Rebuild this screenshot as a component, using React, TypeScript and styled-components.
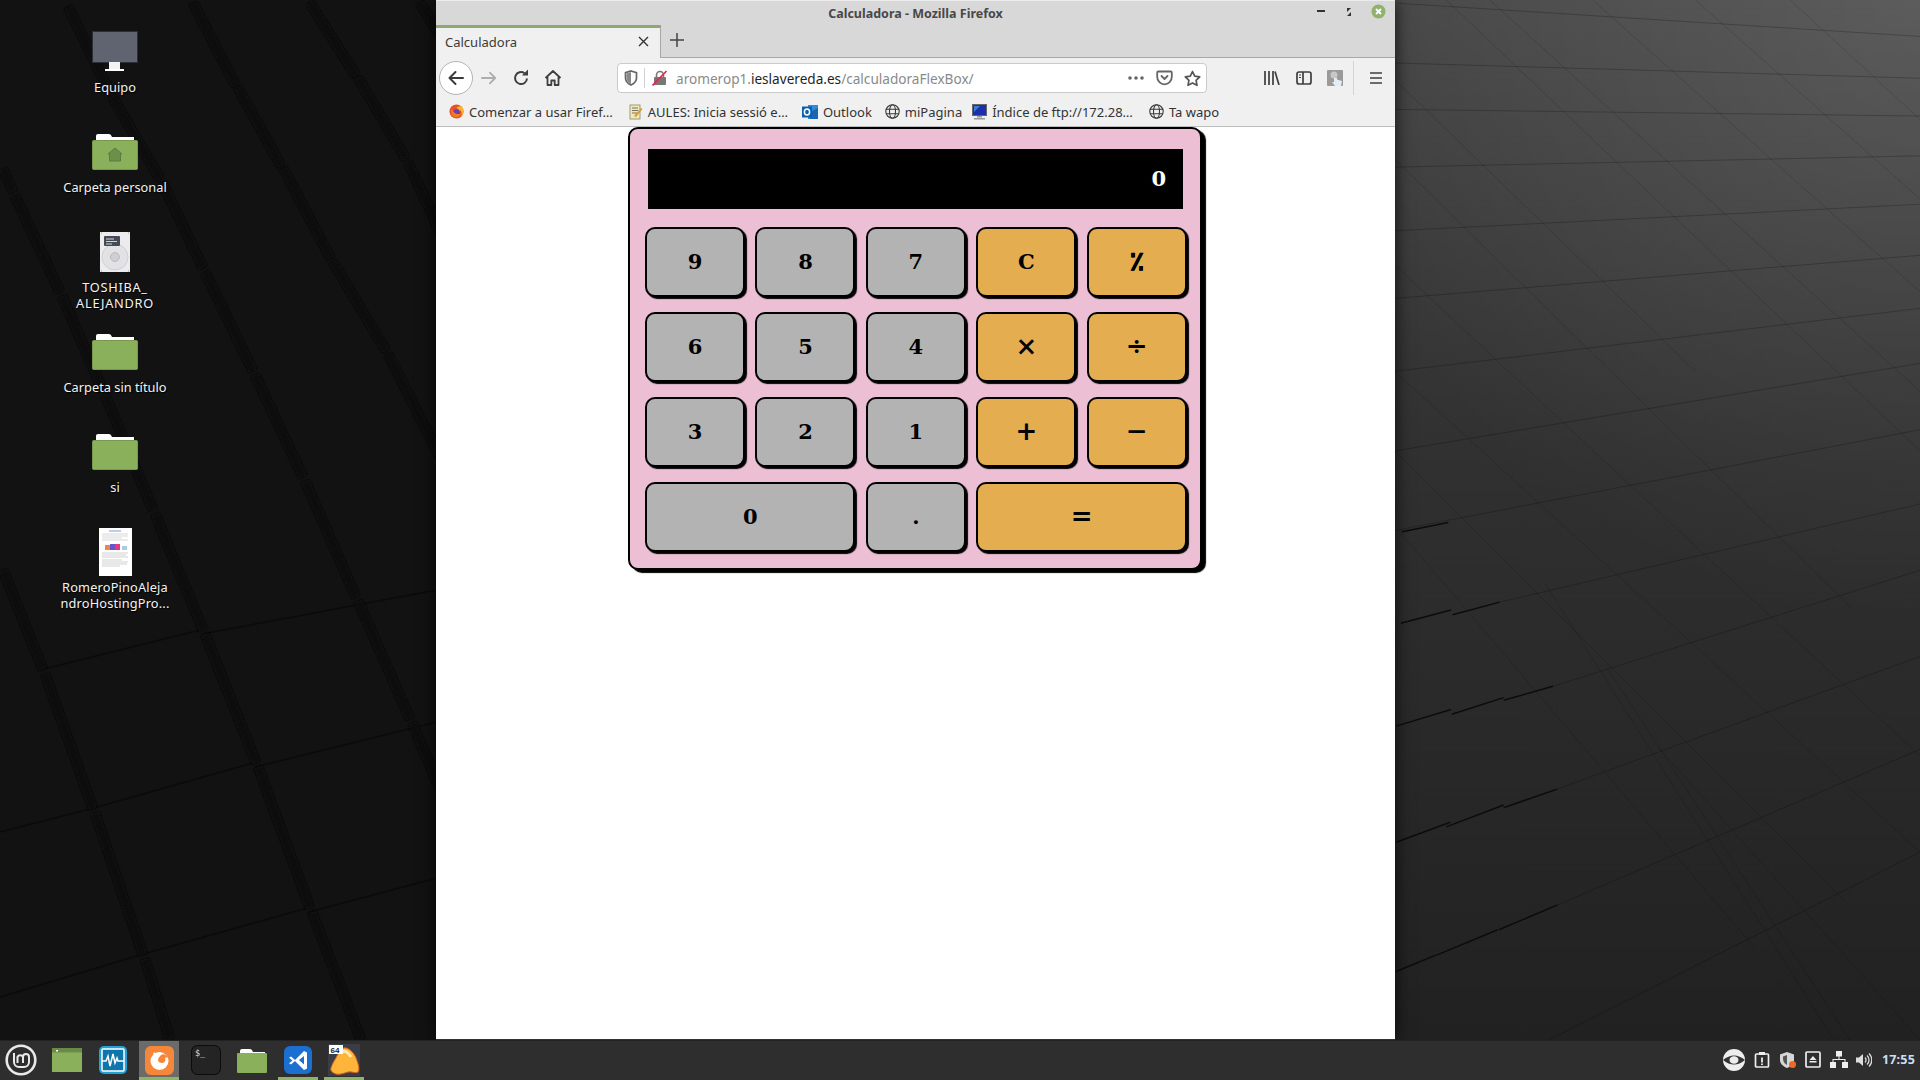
import React from "react";
import styled, { createGlobalStyle } from "styled-components";

const UI = `"Noto Sans", "Open Sans", "Liberation Sans", sans-serif`;
const CALC = `"DejaVu Serif", "Liberation Serif", serif`;

const Global = createGlobalStyle`
  html, body { margin: 0; padding: 0; background: #111; }
  * { box-sizing: border-box; }
`;

const Screen = styled.div`
  position: relative; width: 1920px; height: 1080px; overflow: hidden;
  display: flex; flex-direction: column; font-family: ${UI};
`;
const WallpaperSvg = styled.svg`
  position: absolute; left: 0; top: 0; width: 1920px; height: 1040px; z-index: 0;
`;
const Desktop = styled.div`
  position: relative; z-index: 1; height: 1040px; display: flex;
`;
const IconColumn = styled.div`
  width: 436px; padding: 28px 0 0 55px; display: flex; flex-direction: column;
`;
const DeskItem = styled.div`
  width: 120px; height: 100px; display: flex; flex-direction: column; align-items: center;
`;
const DeskIconBox = styled.div`
  height: 48px; margin-bottom: 3px; display: flex; align-items: center; justify-content: center;
`;
const DeskLabel = styled.div<{ $track: number }>`
  font-size: 12.8px; line-height: 16px; color: #f2f2f2; text-align: center; white-space: nowrap;
  letter-spacing: ${p => p.$track}px; text-shadow: 1px 1px 1px #000;
`;

const Win = styled.div`
  width: 959px; height: 1040px; display: flex; flex-direction: column; background: #fff;
  box-shadow: 0 0 16px rgba(0,0,0,.75);
`;
const TitleBar = styled.div`
  height: 25px; background: #d8d8d8; border-top: 1px solid #ececec; display: flex; align-items: center;
  position: relative; justify-content: center; font-size: 12.5px; font-weight: 700; color: #484848;
`;
const WinButtons = styled.div`
  position: absolute; right: 9px; top: 3px; display: flex; align-items: center; gap: 16px;
`;
const TabStrip = styled.div`
  height: 33px; background: #d8d8d8; display: flex; border-bottom: 1px solid #a8a8a8;
`;
const Tab = styled.div`
  width: 225px; height: 33px; background: #f0f0f0; border-top: 3px solid #8fa873; border-right: 1px solid #a8a8a8;
  display: flex; align-items: center; justify-content: space-between; padding: 0 11px 3px 9px;
  font-size: 13px; color: #3a3a3a;
`;
const NewTab = styled.div`
  width: 32px; display: flex; align-items: center; justify-content: center; padding-bottom: 2px;
`;
const NavBar = styled.div`
  height: 42px; background: #f0f0f0; display: flex; align-items: center; padding: 0 0 2px 3px;
`;
const BackBtn = styled.div`
  width: 34px; height: 34px; border-radius: 50%; background: #fff; border: 1px solid #b4b4b4;
  display: flex; align-items: center; justify-content: center; flex: none;
`;
const NavIcon = styled.div<{ $w: number }>`
  width: ${p => p.$w}px; height: 30px; display: flex; align-items: center; justify-content: center; flex: none;
`;
const UrlBar = styled.div`
  width: 590px; height: 30px; margin-left: 48px; background: #fff; border: 1px solid #cbcbcb; border-radius: 4px;
  display: flex; align-items: center; flex: none; padding-left: 5px;
`;
const UrlSep = styled.div`
  width: 1px; height: 20px; background: #d2d2d2; margin: 0 7px 0 5px; flex: none;
`;
const UrlText = styled.div`
  flex: 1; font-size: 13.6px; color: #8a8a8a; margin-left: 8px; white-space: nowrap;
  strong { font-weight: 400; color: #1f1f1f; }
`;
const ToolGroup = styled.div`
  display: flex; align-items: center; margin-left: 49px;
`;
const ToolSep = styled.div`
  width: 1px; height: 34px; background: #d4d4d4; margin: 0 8px 0 2px; flex: none;
`;
const BookBar = styled.div`
  height: 27px; background: #f0f0f0; border-bottom: 1px solid #bdbdbd; display: flex; align-items: center;
  padding: 0 0 3px 13px;
`;
const BookItem = styled.div<{ $mr: number }>`
  display: flex; align-items: center; gap: 5px; font-size: 13px; color: #333; margin-right: ${p => p.$mr}px;
  white-space: nowrap;
`;

const Page = styled.div`
  flex: 1; background: #fff; padding-left: 192px; border-bottom: 1px solid #333;
`;
const Calc = styled.div`
  width: 574px; height: 443px; background: #ecbfd5; border: 2px solid #000; border-radius: 10px;
  box-shadow: 4px 3px 1px #000; padding: 20px 15px 0;
`;
const Readout = styled.div`
  width: 535px; height: 60px; margin-left: 3px; background: #000; color: #fff; font-family: ${CALC};
  font-weight: 700; font-size: 21px; display: flex; align-items: center; justify-content: flex-end;
  padding: 0 17px 2px 0;
`;
const Keys = styled.div`
  margin-top: 18px; display: grid; grid-template-columns: repeat(5, 100px); grid-auto-rows: 70px;
  column-gap: 10.45px; row-gap: 15px;
`;
const Key = styled.div<{ $op?: boolean; $wide?: boolean; $sym?: boolean; $heavy?: boolean }>`
  grid-column: ${p => (p.$wide ? "span 2" : "span 1")};
  background: ${p => (p.$op ? "#e3ad50" : "#b3b3b3")};
  border: 2px solid #000; border-radius: 10px; box-shadow: 2px 2px 1px #000;
  display: flex; align-items: center; justify-content: center; padding-bottom: 2px;
  font-family: ${CALC}; font-weight: 700; font-size: ${p => (p.$sym ? 26 : 21)}px; color: #000;
  -webkit-text-stroke: ${p => (p.$heavy ? "0.5px #000" : "0")};
`;

const Taskbar = styled.div`
  position: relative; z-index: 2; height: 40px; background: #2e2e2e; border-top: 1px solid #222;
  display: flex; align-items: center; padding-right: 5px;
`;
const MintBtn = styled.div`
  width: 47px; height: 39px; display: flex; align-items: center; justify-content: center; padding: 0 5px 1px 0;
`;
const Launchers = styled.div`
  display: flex; gap: 6.2px; height: 39px;
`;
const Launcher = styled.div<{ $active?: boolean; $running?: boolean }>`
  width: 40px; height: 39px; display: flex; align-items: center; justify-content: center;
  background: ${p => (p.$active ? "#6b6b6b" : "transparent")};
  border-bottom: 3px solid ${p => (p.$running || p.$active ? "#8fb36d" : "transparent")};
  padding-top: 2px;
`;
const Tray = styled.div`
  margin-left: auto; display: flex; align-items: center; gap: 8.5px; padding-bottom: 2px;
`;
const Clock = styled.div`
  font-size: 12.5px; font-weight: 700; color: #c9def2; margin-left: 1px; letter-spacing: .2px;
`;

/* ---------- wallpaper ---------- */
const leftBands: number[][][] = [
  [[65,7],[107,93]], [[109,96],[157,179]], [[159,182],[200,268]], [[202,272],[250,371]], [[252,375],[300,477]], [[302,481],[353,597]], [[355,601],[407,719]], [[409,723],[437,789]],
  [[190,3],[233,86]], [[235,88],[278,166]], [[280,168],[328,259]], [[330,262],[383,351]], [[385,354],[437,457]],
  [[307,3],[353,76]], [[355,78],[403,159]], [[405,162],[437,232]],
  [[417,3],[437,36]],
  [[0,169],[10,192]], [[12,196],[57,292]], [[59,296],[100,391]], [[102,395],[150,510]], [[152,514],[200,630]], [[202,634],[253,763]], [[255,767],[307,908]], [[309,912],[358,1040]],
  [[0,570],[40,670]], [[42,674],[90,809]], [[92,813],[140,955]], [[142,959],[167,1040]],
];
const leftEdges: number[][][] = [
  [[40,670],[200,630]], [[202,634],[437,590]],
  [[90,809],[253,763]], [[255,767],[437,722]],
  [[140,955],[307,908]], [[309,912],[437,878]],
  [[0,832],[90,809]], [[0,997],[140,955]],
];
const Z = (x: number, y: number) => [1300 + x / 2.529, y / 1.508];
const rightLines: number[][] = [
  [250,5,1568,55],[240,95,1568,118],[240,165,1568,175],[240,252,1568,235],[240,348,1568,308],[240,450,1568,385],
  [240,560,1568,465],[240,680,1568,548],[240,800,1568,648],[505,908,1568,760],[640,1035,1568,860],[650,1190,1568,990],
  [650,1365,1568,1130],[630,1568,1568,1285],
];
const rightDiag: number[][] = [
  [240,120,1000,560],[240,240,1400,920],[240,400,1568,1140],[240,560,1568,1285],[240,680,1380,1360],[250,800,1150,1430],
  [480,0,1568,590],[740,0,1568,440],[1000,0,1568,300],[1240,0,1568,180],[370,0,1568,680],
  [620,880,1350,1568],[780,1010,1390,1568],[910,1130,1568,1568],
];
const rightTicks: number[][] = [
  [258,802,375,788],[255,940,382,920],[386,927,505,908],[243,1095,382,1070],[384,1077,515,1052],[515,1056,640,1035],
  [243,1270,380,1240],[370,1247,515,1214],[515,1218,650,1190],[243,1465,345,1440],[347,1440,500,1402],[503,1402,650,1365],
];

const Wallpaper = () => (
  <WallpaperSvg viewBox="0 0 1920 1040">
    <defs>
      <linearGradient id="rv" x1="0" y1="0" x2="0" y2="1">
        <stop offset="0" stopColor="#464646" />
        <stop offset=".45" stopColor="#303030" />
        <stop offset="1" stopColor="#212121" />
      </linearGradient>
      <radialGradient id="rr" gradientUnits="userSpaceOnUse" cx="1920" cy="0" r="620">
        <stop offset="0" stopColor="#fff" stopOpacity=".12" />
        <stop offset="1" stopColor="#fff" stopOpacity="0" />
      </radialGradient>
      <filter id="soft"><feGaussianBlur stdDeviation="1" /></filter>
    </defs>
    <rect x="0" y="0" width="900" height="1040" fill="#121212" />
    <rect x="900" y="0" width="1020" height="1040" fill="url(#rv)" />
    <rect x="900" y="0" width="1020" height="1040" fill="url(#rr)" />
    {leftEdges.map((b, i) => (
      <line key={i} x1={b[0][0]} y1={b[0][1]} x2={b[1][0]} y2={b[1][1]} stroke="#0b0b0b" strokeWidth="1.500" />
    ))}
    <g filter="url(#soft)">
      {leftBands.map((b, i) => (
        <line key={i} x1={b[0][0] + 3} y1={b[0][1]} x2={b[1][0] + 3} y2={b[1][1]} stroke="#090909" strokeWidth="9" />
      ))}
    </g>
    {rightDiag.map((l, i) => {
      const [a, b] = Z(l[0], l[1]);
      const [c, d] = Z(l[2], l[3]);
      return <line key={i} x1={a} y1={b} x2={c} y2={d} stroke="#000" strokeOpacity=".13" strokeWidth="1" />;
    })}
    {rightLines.map((l, i) => {
      const [a, b] = Z(l[0], l[1]);
      const [c, d] = Z(l[2], l[3]);
      return <line key={i} x1={a} y1={b} x2={c} y2={d} stroke="#000" strokeOpacity=".22" strokeWidth="1" />;
    })}
    {rightTicks.map((l, i) => {
      const [a, b] = Z(l[0], l[1]);
      const [c, d] = Z(l[2], l[3]);
      return <line key={i} x1={a} y1={b} x2={c} y2={d} stroke="#0c0c0c" strokeWidth="1.500" />;
    })}
  </WallpaperSvg>
);

/* ---------- desktop icons ---------- */
const MonitorIcon = () => (
  <svg width="46" height="42" viewBox="0 0 46 42">
    <rect x="0.5" y="0.5" width="45" height="31" fill="#5f6470" stroke="#2b2e36" />
    <rect x="17" y="31" width="11" height="7" fill="#f4f4f4" />
    <rect x="13" y="38" width="19" height="2" fill="#fff" />
  </svg>
);
const FolderIcon = ({ home }: { home?: boolean }) => (
  <svg width="46" height="38" viewBox="0 0 46 38">
    <path d="M4 6V3q0-2 2-2h11q2 0 3 3h22v4H4z" fill="#fff" />
    <rect x="0.5" y="7.5" width="45" height="29" rx="1" fill="#8ab05c" stroke="#76994d" />
    {home && <path d="M23 15l7 6h-1.500v7h-11v-7H16z" fill="#6d8f49" stroke="#5c7c3e" />}
  </svg>
);
const DiskIcon = () => (
  <svg width="30" height="40" viewBox="0 0 30 40">
    <rect width="30" height="40" fill="#ececee" />
    <circle cx="15" cy="25" r="13" fill="#e2e2e5" stroke="#d0d0d4" />
    <circle cx="15" cy="25" r="4.500" fill="#cfcfd3" stroke="#bcbcc0" />
    <rect x="4" y="4" width="16" height="10" rx="1" fill="#444a55" />
    <path d="M6 7h8M6 9.500h11M6 12h6" stroke="#cfd3da" strokeWidth="1" />
    <path d="M1 1h1M28 1h1M1 39h1M28 39h1" stroke="#999" />
  </svg>
);
const DocIcon = () => (
  <svg width="33" height="48" viewBox="0 0 33 48">
    <rect width="33" height="48" fill="#fff" />
    <path d="M10 3h12" stroke="#7b9fd6" strokeWidth="1" />
    <path d="M3 6h26M3 8h26M3 10h20M3 12h26" stroke="#c9c9c9" strokeWidth=".7" />
    <rect x="6" y="17" width="5" height="5" fill="#e88a4a" />
    <rect x="11" y="16" width="5" height="6" fill="#6a54c8" />
    <rect x="16" y="16" width="5" height="6" fill="#e83a7a" />
    <rect x="23" y="18" width="5" height="4" fill="#a9cde0" />
    <path d="M3 25h26M3 27h24M3 29h26M3 32h20M3 34h26M3 36h25M3 38h18" stroke="#bdbdbd" strokeWidth=".7" />
  </svg>
);

const desktop: { icon: React.ReactNode; lines: string[]; track: number }[] = [
  { icon: <MonitorIcon />, lines: ["Equipo"], track: 0 },
  { icon: <FolderIcon home />, lines: ["Carpeta personal"], track: 0 },
  { icon: <DiskIcon />, lines: ["TOSHIBA_", "ALEJANDRO"], track: 0.7 },
  { icon: <FolderIcon />, lines: ["Carpeta sin título"], track: 0 },
  { icon: <FolderIcon />, lines: ["si"], track: 0 },
  { icon: <DocIcon />, lines: ["RomeroPinoAleja", "ndroHostingPro..."], track: 0.15 },
];

/* ---------- browser icons ---------- */
const C = "#3f3f3f";
const Back = () => (
  <svg width="20" height="20" viewBox="0 0 20 20" fill="none" stroke="#3a3a3a" strokeWidth="2" strokeLinecap="round" strokeLinejoin="round">
    <path d="M17 10H3.500M9.500 4l-6 6 6 6" />
  </svg>
);
const Forward = () => (
  <svg width="18" height="16" viewBox="0 0 20 18" fill="none" stroke="#adadad" strokeWidth="2" strokeLinecap="round" strokeLinejoin="round">
    <path d="M2 9h15M11 3l6 6-6 6" />
  </svg>
);
const Reload = () => (
  <svg width="18" height="18" viewBox="0 0 18 18" fill="none" stroke={C} strokeWidth="2">
    <path d="M15 9.500A6 6 0 1 1 12.500 4.200" />
    <path d="M10 6.500h6v-6z" fill={C} stroke="none" />
  </svg>
);
const Home = () => (
  <svg width="18" height="18" viewBox="0 0 18 18" fill="none" stroke={C} strokeWidth="1.800" strokeLinejoin="round">
    <path d="M1.500 9L9 2l7.500 7M3.500 8v8h3.800v-4.500h3.400V16h3.800V8" />
  </svg>
);
const Shield = () => (
  <svg width="14" height="16" viewBox="0 0 14 16" fill="none" stroke="#666" strokeWidth="1.700">
    <path d="M7 1l5.500 1.600V8c0 3.500-2.800 5.700-5.500 7-2.700-1.300-5.500-3.500-5.500-7V2.600z" />
    <path d="M7 2v12c-2-1-4.500-3-4.500-6V3.500z" fill="#888" stroke="none" />
  </svg>
);
const BrokenLock = () => (
  <svg width="16" height="16" viewBox="0 0 16 16" fill="none">
    <rect x="2" y="7" width="12" height="8" rx="1" fill="#777" />
    <path d="M4.500 7V5a3.500 3.500 0 0 1 7 0v2" stroke="#777" strokeWidth="1.600" />
    <path d="M0.500 15.500L14.500 1" stroke="#e22850" strokeWidth="1.700" />
  </svg>
);
const Dots = () => (
  <svg width="16" height="4" viewBox="0 0 16 4" fill="#666">
    <circle cx="2" cy="2" r="1.800" /><circle cx="8" cy="2" r="1.800" /><circle cx="14" cy="2" r="1.800" />
  </svg>
);
const Pocket = () => (
  <svg width="17" height="16" viewBox="0 0 17 16" fill="none" stroke="#666" strokeWidth="1.800" strokeLinecap="round" strokeLinejoin="round">
    <path d="M2.200 1.500h12.600q1 0 1 1V7a7.300 7.300 0 0 1-14.600 0V2.500q0-1 1-1z" />
    <path d="M5.500 6l3 3 3-3" />
  </svg>
);
const Star = () => (
  <svg width="17" height="17" viewBox="0 0 17 17" fill="none" stroke="#555" strokeWidth="1.700" strokeLinejoin="round">
    <path d="M8.500 1.500l2.200 4.600 5 .7-3.600 3.500.9 5-4.500-2.400L4 15.300l.9-5L1.300 6.800l5-.7z" />
  </svg>
);
const Library = () => (
  <svg width="16" height="14" viewBox="0 0 16 14" stroke={C} strokeWidth="1.700" fill="none">
    <path d="M1 0v14M5 0v14M9 0v14M11 .5l4 13.500" />
  </svg>
);
const SideBar = () => (
  <svg width="16" height="14" viewBox="0 0 16 14" fill="none" stroke={C} strokeWidth="1.700">
    <rect x="1" y="1" width="14" height="12" rx="2" />
    <path d="M7 1v12" />
    <path d="M3 4h2M3 6.500h2" strokeWidth="1" />
  </svg>
);
const Avatar = () => (
  <svg width="16" height="16" viewBox="0 0 16 16">
    <rect width="16" height="16" rx="1" fill="#9a9a9a" />
    <circle cx="7" cy="5" r="3.500" fill="#c8c8c8" />
    <path d="M7 8v4H5l3 4h6l1-5-5-1.500V8z" fill="#e4edf5" />
  </svg>
);
const Burger = () => (
  <svg width="14" height="12" viewBox="0 0 14 12" stroke={C} strokeWidth="1.600">
    <path d="M1 1h12M1 6h12M1 11h12" />
  </svg>
);
const Globe = () => (
  <svg width="15" height="15" viewBox="0 0 15 15" fill="none" stroke="#3a3a3a" strokeWidth="1.100">
    <circle cx="7.500" cy="7.500" r="6.700" />
    <ellipse cx="7.500" cy="7.500" rx="3" ry="6.700" />
    <path d="M1 5.200h13M1 9.800h13" />
  </svg>
);
const FirefoxIcon = () => (
  <svg width="15" height="15" viewBox="0 0 16 16">
    <circle cx="8" cy="8" r="7.500" fill="#e8502c" />
    <path d="M13 2.500A7.500 7.500 0 0 1 15.500 8c0 2-1 4-2.500 5.300 1-2.500.5-5.800-1-7.500.3 1-.2 1.700-.8 2C11 6 9.500 4.800 8 4.300 8.800 3 10.800 2 13 2.500z" fill="#ffb52e" />
    <circle cx="8" cy="9" r="3.500" fill="#6a3fb0" />
    <path d="M3 5c1.500 5 6 7 10 5-1 3-4 4.500-6.500 4C3 13.500 1.500 9 3 5z" fill="#f47a20" />
  </svg>
);
const NoteIcon = () => (
  <svg width="14" height="16" viewBox="0 0 14 16">
    <rect x="1" y="1" width="10" height="14" fill="#f3e8b8" stroke="#8a8560" strokeWidth=".8" />
    <path d="M3 4h6M3 6.500h6M3 9h5" stroke="#555" strokeWidth=".8" />
    <path d="M5 12l7-8 1.500 1L7 13z" fill="#d79a2b" />
  </svg>
);
const OutlookIcon = () => (
  <svg width="16" height="16" viewBox="0 0 16 16">
    <rect x="6" y="1" width="10" height="14" fill="#2f8ad8" />
    <path d="M8 8l8-4v11H8z" fill="#1b64b5" />
    <rect x="0" y="2.500" width="10" height="11" fill="#0e5fb0" />
    <ellipse cx="5" cy="8" rx="2.600" ry="3" fill="none" stroke="#fff" strokeWidth="1.500" />
  </svg>
);
const FtpIcon = () => (
  <svg width="15" height="16" viewBox="0 0 15 16">
    <rect x="0.500" y="0.500" width="14" height="11" fill="#1c2fae" stroke="#666" />
    <path d="M2 2h6L2 8z" fill="#3c7bd8" />
    <path d="M5 12h5v1.500H5zM2 14h11v1.500H2z" fill="#999" />
  </svg>
);

/* ---------- taskbar icons ---------- */
const MintLogo = () => (
  <svg width="32" height="32" viewBox="0 0 32 32" fill="none" stroke="#e9e9e9">
    <circle cx="16" cy="16" r="14.300" strokeWidth="2.600" />
    <path d="M9 9v9a5 5 0 0 0 5 5h5a5 5 0 0 0 5-5v-5a3 3 0 0 0-6 0v6M18 13a3 3 0 0 0-5.500 0v6" strokeWidth="2" />
  </svg>
);
const TbFiles = () => (
  <svg width="30" height="24" viewBox="0 0 30 24">
    <rect width="30" height="24" fill="#8ab05c" />
    <rect width="30" height="4.500" fill="#6a8a48" />
    <rect x="4" y="2" width="2" height="1.500" fill="#fff" />
  </svg>
);
const TbMonitor = () => (
  <svg width="28" height="28" viewBox="0 0 28 28">
    <rect width="28" height="28" rx="5" fill="#22a0d8" />
    <rect x="3" y="3" width="22" height="22" rx="1" fill="#0f76ad" stroke="#fff" strokeWidth="1.500" />
    <path d="M3 15h4l2-5 2 10 3-12 2 9 2-5 1 3h6" fill="none" stroke="#fff" strokeWidth="1.500" />
  </svg>
);
const TbFirefox = () => (
  <svg width="29" height="29" viewBox="0 0 29 29">
    <rect width="29" height="29" rx="6" fill="#f5873a" />
    <circle cx="14.500" cy="15" r="9" fill="#fff" />
    <path d="M16 9c3-2 6 0 7 3-1-1-2-1-3 0 1 2 0 5-3 5-2 0-4-1-4-3s2-4 3-5z" fill="#f5873a" />
    <path d="M9 6c-1 2-1 3 0 5 1-2 3-3 5-3-2 0-4-.5-5-2z" fill="#fff" />
  </svg>
);
const TbTerminal = () => (
  <svg width="30" height="30" viewBox="0 0 30 30">
    <rect x="0.500" y="0.500" width="29" height="29" rx="6" fill="#242424" stroke="#0b0b0b" />
    <text x="4" y="11" fontFamily="DejaVu Sans Mono, monospace" fontSize="8.500" fill="#ddd">$_</text>
  </svg>
);
const TbFolder = () => (
  <svg width="30" height="25" viewBox="0 0 30 25">
    <path d="M3 6V3q0-2 2-2h8q2 0 3 3h12v4H3z" fill="#fff" />
    <rect y="5" width="30" height="20" rx="1" fill="#8ab05c" />
  </svg>
);
const TbCode = () => (
  <svg width="28" height="28" viewBox="0 0 28 28">
    <rect width="28" height="28" rx="6" fill="#1a6fd0" />
    <path d="M20 5l-9 9-4-3.500-2 1.300 3.500 2.700L5 17.200l2 1.300 4-3.500 9 9 3-1.500V6.500zM20 10v8.500L15 14z" fill="#fff" fillRule="evenodd" />
  </svg>
);
const TbGecko = () => (
  <svg width="32" height="32" viewBox="0 0 32 32">
    <rect width="32" height="32" fill="#3a3d45" />
    <path d="M3 24c2-6 4-8 6-12 2-4 5-9 9-8 4 1 8 5 10 10 2 5 4 11 2 14-2 2-6-1-10 0-4 1-8 3-12 2-3-1-6-3-5-6z" fill="#ffb53a" stroke="#d9641e" strokeWidth="1" />
    <path d="M14 8c3-2 7 1 9 5" fill="none" stroke="#ffe9a8" strokeWidth="3" />
    <rect x="1" y="1" width="14" height="9" fill="#fff" />
    <text x="2.500" y="8.500" fontFamily="Liberation Sans, sans-serif" fontWeight="700" fontSize="8" fill="#222">64</text>
  </svg>
);
const TrEye = () => (
  <svg width="24" height="24" viewBox="0 0 24 24">
    <circle cx="12" cy="12" r="11" fill="#eee" />
    <path d="M1 12q11-9 22 0q-11 9-22 0z" fill="#333" />
    <ellipse cx="12" cy="12" rx="4.500" ry="3.800" fill="#eee" />
  </svg>
);
const TrClip = () => (
  <svg width="16" height="17" viewBox="0 0 16 17" fill="none" stroke="#eee" strokeWidth="1.700">
    <rect x="1.500" y="3" width="13" height="13" rx="1" />
    <rect x="5" y="1" width="6" height="3" fill="#eee" stroke="none" />
    <path d="M8 6.500v5M8 12.500v1.500" strokeWidth="1.800" />
  </svg>
);
const TrShield = () => (
  <svg width="18" height="18" viewBox="0 0 18 18">
    <path d="M8 1l7 2.500V9c0 4-3.500 6.500-7 8-3.500-1.500-7-4-7-8V3.500z" fill="#d6d6d6" />
    <path d="M8 4v10c-2-1-4-3-4-6V5.500z" fill="#555" />
    <circle cx="13.500" cy="13.500" r="3.500" fill="#ea6a26" />
  </svg>
);
const TrEject = () => (
  <svg width="16" height="17" viewBox="0 0 16 17" fill="none">
    <rect x="1" y="1" width="14" height="15" rx="1" stroke="#eee" strokeWidth="1.700" />
    <path d="M8 5l3.500 4h-7z" fill="#eee" />
    <rect x="4.500" y="10" width="7" height="1.500" fill="#eee" />
  </svg>
);
const TrNet = () => (
  <svg width="18" height="17" viewBox="0 0 18 17" fill="#eee">
    <rect x="6" y="0" width="6" height="5.500" />
    <rect x="0" y="11" width="6" height="6" />
    <rect x="12" y="11" width="6" height="6" />
    <path d="M8.500 5h1v3H15.500v3h-1V9h-11v2h-1V8H8.500z" />
  </svg>
);
const TrVol = () => (
  <svg width="16" height="16" viewBox="0 0 16 16" fill="none">
    <path d="M0 5.500h3L7 2v12l-4-3.500H0z" fill="#ddd" />
    <path d="M9 5.500a3.500 3.500 0 0 1 0 5M11 3.500a6 6 0 0 1 0 9M13 1.500a9 9 0 0 1 0 13" stroke="#ddd" strokeWidth="1.300" />
  </svg>
);

const keys: { k: string; op?: boolean; wide?: boolean; sym?: boolean; heavy?: boolean }[] = [
  { k: "9" }, { k: "8" }, { k: "7" }, { k: "C", op: true }, { k: "٪", op: true, sym: true, heavy: true },
  { k: "6" }, { k: "5" }, { k: "4" }, { k: "×", op: true, sym: true }, { k: "÷", op: true, sym: true },
  { k: "3" }, { k: "2" }, { k: "1" }, { k: "+", op: true, sym: true }, { k: "−", op: true, sym: true },
  { k: "0", wide: true }, { k: "." }, { k: "=", op: true, wide: true, sym: true },
];

const books: { icon: React.ReactNode; text: string; mr: number }[] = [
  { icon: <FirefoxIcon />, text: "Comenzar a usar Firef…", mr: 16 },
  { icon: <NoteIcon />, text: "AULES: Inicia sessió e…", mr: 14 },
  { icon: <OutlookIcon />, text: "Outlook", mr: 13 },
  { icon: <Globe />, text: "miPagina", mr: 10 },
  { icon: <FtpIcon />, text: "Índice de ftp://172.28…", mr: 16 },
  { icon: <Globe />, text: "Ta wapo", mr: 0 },
];

export default function App() {
  return (
    <Screen>
      <Global />
      <Wallpaper />
      <Desktop>
        <IconColumn>
          {desktop.map(d => (
            <DeskItem key={d.lines[0]}>
              <DeskIconBox>{d.icon}</DeskIconBox>
              {d.lines.map(l => <DeskLabel key={l} $track={d.track}>{l}</DeskLabel>)}
            </DeskItem>
          ))}
        </IconColumn>
        <Win>
          <TitleBar>
            Calculadora - Mozilla Firefox
            <WinButtons>
              <svg width="8" height="3" viewBox="0 0 8 3"><rect width="8" height="2" fill="#333" /></svg>
              <svg width="14" height="8" viewBox="0 0 14 8"><path d="M6 0h4L6 4zM10 8H6l4-4z" fill="#333" /></svg>
              <svg width="15" height="15" viewBox="0 0 15 15">
                <circle cx="7.500" cy="7.500" r="7" fill="#8fb36d" />
                <path d="M5 5l5 5M10 5l-5 5" stroke="#fff" strokeWidth="1.800" />
              </svg>
            </WinButtons>
          </TitleBar>
          <TabStrip>
            <Tab>
              Calculadora
              <svg width="11" height="11" viewBox="0 0 11 11"><path d="M1 1l9 9M10 1l-9 9" stroke="#333" strokeWidth="1.400" /></svg>
            </Tab>
            <NewTab>
              <svg width="14" height="14" viewBox="0 0 14 14"><path d="M7 0v14M0 7h14" stroke="#444" strokeWidth="1.500" /></svg>
            </NewTab>
          </TabStrip>
          <NavBar>
            <BackBtn><Back /></BackBtn>
            <NavIcon $w={32}><Forward /></NavIcon>
            <NavIcon $w={32}><Reload /></NavIcon>
            <NavIcon $w={32}><Home /></NavIcon>
            <UrlBar>
              <NavIcon $w={16}><Shield /></NavIcon>
              <UrlSep />
              <BrokenLock />
              <UrlText>aromerop1.<strong>ieslavereda.es</strong>/calculadoraFlexBox/</UrlText>
              <NavIcon $w={28}><Dots /></NavIcon>
              <NavIcon $w={28}><Pocket /></NavIcon>
              <NavIcon $w={28}><Star /></NavIcon>
            </UrlBar>
            <ToolGroup>
              <NavIcon $w={32}><Library /></NavIcon>
              <NavIcon $w={31}><SideBar /></NavIcon>
              <NavIcon $w={32}><Avatar /></NavIcon>
              <ToolSep />
              <NavIcon $w={28}><Burger /></NavIcon>
            </ToolGroup>
          </NavBar>
          <BookBar>
            {books.map((b, i) => (
              <BookItem key={i} $mr={b.mr}>{b.icon}{b.text}</BookItem>
            ))}
          </BookBar>
          <Page>
            <Calc>
              <Readout>0</Readout>
              <Keys>
                {keys.map(b => <Key key={b.k} $op={b.op} $wide={b.wide} $sym={b.sym} $heavy={b.heavy}>{b.k}</Key>)}
              </Keys>
            </Calc>
          </Page>
        </Win>
      </Desktop>
      <Taskbar>
        <MintBtn><MintLogo /></MintBtn>
        <Launchers>
          <Launcher><TbFiles /></Launcher>
          <Launcher><TbMonitor /></Launcher>
          <Launcher $active><TbFirefox /></Launcher>
          <Launcher><TbTerminal /></Launcher>
          <Launcher><TbFolder /></Launcher>
          <Launcher $running><TbCode /></Launcher>
          <Launcher $running><TbGecko /></Launcher>
        </Launchers>
        <Tray>
          <TrEye /><TrClip /><TrShield /><TrEject /><TrNet /><TrVol />
          <Clock>17:55</Clock>
        </Tray>
      </Taskbar>
    </Screen>
  );
}
